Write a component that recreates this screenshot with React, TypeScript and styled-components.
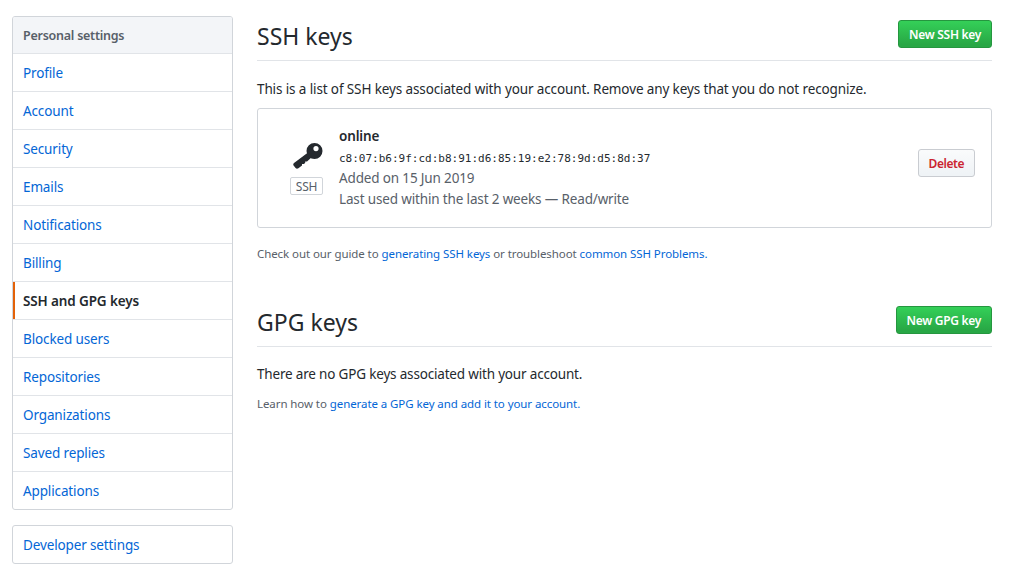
import styled, { createGlobalStyle } from 'styled-components';

const GlobalStyle = createGlobalStyle`
  html, body {
    margin: 0;
    padding: 0;
    background: #fff;
  }
  body {
    font-family: "Noto Sans", "Open Sans", sans-serif;
    font-size: 13.5px;
    letter-spacing: -0.13px;
    color: #24292e;
  }
  * {
    box-sizing: border-box;
  }
`;

const Page = styled.div`
  width: 1009px;
  height: 572px;
  overflow: hidden;
  display: flex;
  gap: 24px;
  padding: 16px 17px 0 12px;
`;

const Sidebar = styled.nav`
  width: 221px;
  flex: none;
  display: flex;
  flex-direction: column;
  gap: 15px;
`;

const Menu = styled.div`
  border: 1px solid #d1d5da;
  border-radius: 3px;
  overflow: hidden;
`;

const MenuHeading = styled.div`
  height: 37px;
  padding: 0 10px;
  display: flex;
  align-items: center;
  background: #f3f5f8;
  border-bottom: 1px solid #e1e4e8;
  font-size: 12.5px;
  letter-spacing: -0.25px;
  font-weight: 600;
  color: #586069;
`;

const MenuItem = styled.a<{ $selected?: boolean }>`
  display: flex;
  align-items: center;
  height: 38px;
  padding: 0 10px;
  color: ${p => (p.$selected ? '#24292e' : '#0366d6')};
  font-weight: ${p => (p.$selected ? 600 : 400)};
  border-bottom: 1px solid #e1e4e8;
  box-shadow: ${p => (p.$selected ? 'inset 2px 0 0 #e36209' : 'none')};

  &:last-child {
    border-bottom: 0;
    height: 37px;
  }
`;

const Main = styled.main`
  flex: 1;
  min-width: 0;
`;

const SectionHead = styled.div`
  display: flex;
  justify-content: space-between;
  align-items: flex-start;
  height: 45px;
  padding-top: 4px;
  border-bottom: 1px solid #e1e4e8;
`;

const Title = styled.h2`
  margin: 0;
  font-size: 23px;
  letter-spacing: 0;
  font-weight: 400;
  line-height: 32px;
`;

const GreenButton = styled.a`
  height: 28px;
  padding: 0 10px;
  display: flex;
  align-items: center;
  border: 1px solid #25963f;
  border-radius: 3px;
  font-size: 12px;
  letter-spacing: -0.3px;
  font-weight: 600;
  color: #fff;
  background-image: linear-gradient(-180deg, #34d058, #28a745 90%);
`;

const Lead = styled.p`
  margin: 18px 0 0;
  line-height: 20px;
  letter-spacing: -0.12px;
`;

const KeyBox = styled.div`
  margin-top: 9px;
  height: 120px;
  border: 1px solid #d1d5da;
  border-radius: 3px;
  display: flex;
  align-items: center;
  padding: 0 16px 0 32px;
`;

const KeyType = styled.div`
  width: 33px;
  flex: none;
  margin: 2px 16px 0 0;
  display: flex;
  flex-direction: column;
  align-items: center;
  gap: 8px;
`;

const KeyGlyph = styled.svg`
  display: block;
  margin-left: 3px;
`;

const Badge = styled.span`
  width: 33px;
  height: 18px;
  display: flex;
  align-items: center;
  justify-content: center;
  border: 1px solid #d1d5da;
  border-radius: 2px;
  font-size: 12px;
  letter-spacing: -0.2px;
  color: #586069;
`;

const KeyInfo = styled.div`
  flex: 1;
  display: flex;
  flex-direction: column;
`;

const KeyName = styled.strong`
  font-weight: 600;
  line-height: 21px;
  margin-bottom: 3px;
`;

const Fingerprint = styled.code`
  font-family: "DejaVu Sans Mono", "Liberation Mono", monospace;
  font-size: 11px;
  letter-spacing: 0;
  line-height: 18px;
`;

const KeyMeta = styled.div`
  line-height: 21px;
  letter-spacing: -0.15px;
  color: #586069;
`;

const DeleteButton = styled.a`
  height: 28px;
  padding: 0 10px;
  margin-bottom: 10px;
  display: flex;
  align-items: center;
  border: 1px solid #c9ccd1;
  border-radius: 3px;
  font-size: 12px;
  letter-spacing: -0.45px;
  font-weight: 600;
  color: #cb2431;
  background-image: linear-gradient(-180deg, #fafbfc, #eff3f6 90%);
`;

const Note = styled.p`
  margin: 17px 0 0;
  font-size: 11.5px;
  letter-spacing: -0.08px;
  line-height: 18px;
  color: #586069;

  a {
    color: #0366d6;
  }
`;

const SecondSection = styled.section`
  margin-top: 39px;
`;

const EmptyLead = styled(Lead)`
  margin-top: 17px;
  letter-spacing: -0.18px;
`;

const SmallNote = styled(Note)`
  margin-top: 11px;
`;

const menuItems = [
  'Profile',
  'Account',
  'Security',
  'Emails',
  'Notifications',
  'Billing',
  'SSH and GPG keys',
  'Blocked users',
  'Repositories',
  'Organizations',
  'Saved replies',
  'Applications',
];

const KeyIcon = () => (
  <KeyGlyph width="30" height="26" viewBox="0 0 30 26" fill="#24292e">
    <path
      fillRule="evenodd"
      d="M21.5 0a8 8 0 1 1 0 16a8 8 0 0 1 0-16zM23 3a2.6 2.6 0 1 0 0 5.2a2.6 2.6 0 0 0 0-5.2z"
    />
    <path d="M15 9.5 L1 20 Q-.4 21.2 .8 22.8 L2.6 25 Q3.8 26.2 5.4 25.2 L9 22.6 L9 21 L11 21 L12.2 19.8 L12.2 18.6 L14 18.6 L19 14 Z" />
  </KeyGlyph>
);

export default function App() {
  return (
    <Page>
      <GlobalStyle />
      <Sidebar>
        <Menu>
          <MenuHeading>Personal settings</MenuHeading>
          {menuItems.map(item => (
            <MenuItem key={item} $selected={item === 'SSH and GPG keys'}>
              {item}
            </MenuItem>
          ))}
        </Menu>
        <Menu>
          <MenuItem>Developer settings</MenuItem>
        </Menu>
      </Sidebar>

      <Main>
        <section>
          <SectionHead>
            <Title>SSH keys</Title>
            <GreenButton>New SSH key</GreenButton>
          </SectionHead>
          <Lead>This is a list of SSH keys associated with your account. Remove any keys that you do not recognize.</Lead>
          <KeyBox>
            <KeyType>
              <KeyIcon />
              <Badge>SSH</Badge>
            </KeyType>
            <KeyInfo>
              <KeyName>online</KeyName>
              <Fingerprint>c8:07:b6:9f:cd:b8:91:d6:85:19:e2:78:9d:d5:8d:37</Fingerprint>
              <KeyMeta>Added on 15 Jun 2019</KeyMeta>
              <KeyMeta>Last used within the last 2 weeks — Read/write</KeyMeta>
            </KeyInfo>
            <DeleteButton>Delete</DeleteButton>
          </KeyBox>
          <Note>
            Check out our guide to <a>generating SSH keys</a> or troubleshoot <a>common SSH Problems.</a>
          </Note>
        </section>

        <SecondSection>
          <SectionHead>
            <Title>GPG keys</Title>
            <GreenButton>New GPG key</GreenButton>
          </SectionHead>
          <EmptyLead>There are no GPG keys associated with your account.</EmptyLead>
          <SmallNote>
            Learn how to <a>generate a GPG key and add it to your account.</a>
          </SmallNote>
        </SecondSection>
      </Main>
    </Page>
  );
}
